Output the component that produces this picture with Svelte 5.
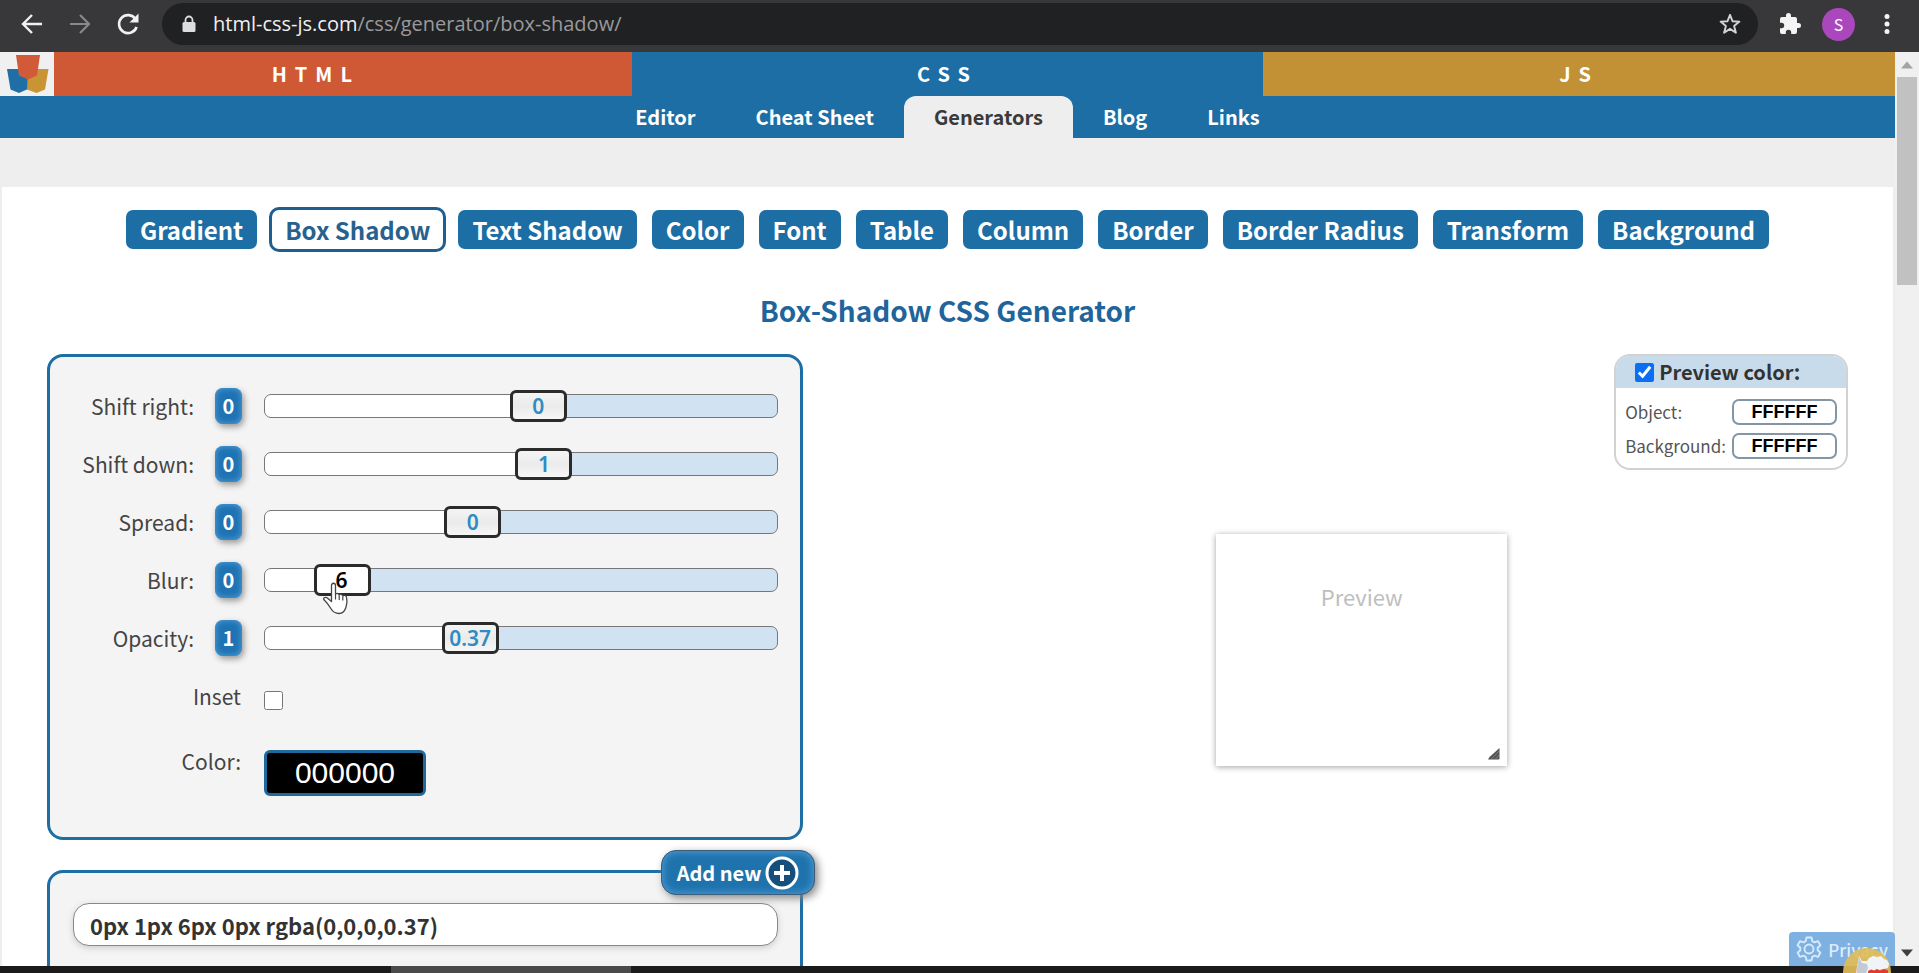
<script>
  const languages = [
    { name: 'HTML', tone: 'html' },
    { name: 'CSS', tone: 'css' },
    { name: 'JS', tone: 'js' }
  ];
  const sections = ['Editor', 'Cheat Sheet', 'Generators', 'Blog', 'Links'];
  const generators = [
    'Gradient', 'Box Shadow', 'Text Shadow', 'Color', 'Font', 'Table',
    'Column', 'Border', 'Border Radius', 'Transform', 'Background'
  ];

  let sliders = $state([
    { id: 'right', label: 'Shift right:', reset: 0, min: -43, max: 37, step: 1, value: 0 },
    { id: 'down', label: 'Shift down:', reset: 0, min: -43, max: 37, step: 1, value: 1 },
    { id: 'spread', label: 'Spread:', reset: 0, min: -39, max: 60, step: 1, value: 0 },
    { id: 'blur', label: 'Blur:', reset: 0, min: 0, max: 56, step: 1, value: 6, active: true },
    { id: 'opacity', label: 'Opacity:', reset: 1, min: -0.03, max: 1, step: 0.01, value: 0.37 }
  ]);
  let inset = $state(false);
  let color = $state('000000');
  let previewOn = $state(true);
  let objectColor = $state('FFFFFF');
  let backgroundColor = $state('FFFFFF');

  const shadow = $derived(
    `${sliders[0].value}px ${sliders[1].value}px ${sliders[3].value}px ${sliders[2].value}px rgba(0,0,0,${sliders[4].value})`
  );
  const share = (s) => (s.value - s.min) / (s.max - s.min);
</script>

<div class="window">
  <header class="browser">
    <button class="tool" aria-label="Back">
      <svg width="24" height="24" viewBox="0 0 24 24"><path d="M22 12H3M12 3l-9 9 9 9" fill="none" stroke="#f1f1f1" stroke-width="2.4" /></svg>
    </button>
    <button class="tool" aria-label="Forward">
      <svg width="24" height="24" viewBox="0 0 24 24"><path d="M2 12h19M12 3l9 9-9 9" fill="none" stroke="#88898b" stroke-width="2.2" /></svg>
    </button>
    <button class="tool" aria-label="Reload">
      <svg width="24" height="24" viewBox="0 0 24 24"><path d="M19.5 7A9 9 0 1 0 20.6 15" fill="none" stroke="#f1f1f1" stroke-width="2.6" /><path d="M22.500 1.500v9h-9z" fill="#f1f1f1" /></svg>
    </button>
    <div class="address">
      <svg width="14" height="18" viewBox="0 0 14 18"><path d="M3.500 8V5a3.500 3.500 0 0 1 7 0v3" fill="none" stroke="#dedede" stroke-width="1.800" /><rect x="0.500" y="7" width="13" height="10" rx="1.500" fill="#dedede" /></svg>
      <span class="url">html-css-js.com<span class="path">/css/generator/box-shadow/</span></span>
      <button class="star" aria-label="Bookmark this page">
        <svg width="24" height="24" viewBox="0 0 24 24"><path d="M12 2.800l2.500 6.400 6.900.4-5.300 4.400 1.800 6.700L12 16.900l-5.900 3.800 1.800-6.700-5.300-4.400 6.900-.4z" fill="none" stroke="#d4d4d4" stroke-width="1.900" stroke-linejoin="round" /></svg>
      </button>
    </div>
    <button class="tool" aria-label="Extensions">
      <svg width="24" height="24" viewBox="0 0 24 24"><path d="M20.500 11H19V7a2 2 0 0 0-2-2h-4V3.500a2.500 2.500 0 0 0-5 0V5H4a2 2 0 0 0-2 2v3.800h1.500a2.700 2.700 0 0 1 0 5.400H2V20c0 1.100.9 2 2 2h3.800v-1.500a2.700 2.700 0 0 1 5.400 0V22H17a2 2 0 0 0 2-2v-4h1.500a2.500 2.500 0 0 0 0-5z" fill="#f4f4f4" /></svg>
    </button>
    <button class="avatar" aria-label="Profile">S</button>
    <button class="tool" aria-label="Menu">
      <svg width="8" height="24" viewBox="0 0 8 24"><g fill="#f4f4f4"><circle cx="4" cy="4.500" r="2.500" /><circle cx="4" cy="12" r="2.500" /><circle cx="4" cy="19.500" r="2.500" /></g></svg>
    </button>
  </header>

  <div class="viewport">
    <div class="page">
      <nav class="languages" aria-label="Languages">
        {#each languages as lang}
          <a href="#{lang.tone}" class={lang.tone}>{lang.name}</a>
        {/each}
        <a class="logo" href="#home" aria-label="Home">
          <svg width="54" height="44" viewBox="0 0 54 44">
            <rect width="54" height="44" fill="#f0f0f1" />
            <path d="M7 17h21v20l-9 4-8.500-3.500z" fill="#1f6fa6" />
            <path d="M28 17h20.500L45 37.500 36.500 41 27 37.500z" fill="#c99433" />
            <path d="M16 3h24L37 23.500 28 27.500 19 23.500z" fill="#d15a38" />
          </svg>
        </a>
      </nav>
      <nav class="sections" aria-label="Sections">
        {#each sections as name}
          <a href="#{name}" class:current={name === 'Generators'}>{name}</a>
        {/each}
      </nav>

      <main>
        <nav class="generators" aria-label="Generators">
          {#each generators as name}
            <a href="#{name}" class:current={name === 'Box Shadow'}>{name}</a>
          {/each}
        </nav>
        <h1>Box-Shadow CSS Generator</h1>

        <div class="columns">
          <div class="left">
            <section class="panel settings">
              {#each sliders as s (s.id)}
                <div class="row">
                  <label for={s.id}>{s.label}</label>
                  <button class="reset" onclick={() => (s.value = s.reset)}>{s.reset}</button>
                  <div class="slider" class:active={s.active}>
                    <input
                      type="range" id={s.id} min={s.min} max={s.max} step={s.step}
                      bind:value={s.value} style="--share: {share(s)}"
                    />
                    <output for={s.id} style="--share: {share(s)}">{s.value}</output>
                    {#if s.active}
                      <svg class="pointer" style="--share: {share(s)}" width="27" height="33" viewBox="0 0 27 33">
                        <path d="M9.500 19.500V3.500c0-3 4-3 4 0v9c.5-1.800 3.300-1.600 3.700.6.900-1.500 3.300-1 3.600.9 1-1.200 3.300-.6 3.700 1.200.8 3 .5 7-.6 10.300C22.500 29.500 20.500 31.500 17 31.500c-4 0-6.500-2-8.500-5.500-1.900-3.200-4.200-6-6.500-8.200C.8 16.200 3 14.600 5 15.800z" fill="#fff" stroke="#444" stroke-width="1.300" stroke-linejoin="round" />
                        <path d="M13.500 12.500v5M17.200 13.500v4.500M20.800 14.500v4" stroke="#444" stroke-width="1.200" />
                      </svg>
                    {/if}
                  </div>
                </div>
              {/each}
              <div class="row inset">
                <label for="inset">Inset</label>
                <input type="checkbox" id="inset" bind:checked={inset} />
              </div>
              <div class="row color">
                <label for="color">Color:</label>
                <input type="text" id="color" bind:value={color} />
              </div>
            </section>

            <section class="panel results">
              <button class="add">
                Add new
                <svg width="34" height="34" viewBox="0 0 34 34"><circle cx="17" cy="17" r="15" fill="#164f7c" stroke="#fff" stroke-width="3" /><path d="M17 9v16M9 17h16" stroke="#fff" stroke-width="4" /></svg>
              </button>
              <input class="code" type="text" aria-label="Shadow value" value={shadow} readonly />
            </section>
          </div>

          <div class="right">
            <section class="swatches">
              <label class="heading"><input type="checkbox" bind:checked={previewOn} />Preview color:</label>
              <div class="fields">
                <label for="object">Object:</label>
                <input type="text" id="object" bind:value={objectColor} />
                <label for="background">Background:</label>
                <input type="text" id="background" bind:value={backgroundColor} />
              </div>
            </section>
            <div class="preview" style="box-shadow: {shadow}">
              Preview
              <svg width="12" height="12" viewBox="0 0 12 12"><path d="M11.500 0v11L11 11.500H0L1.500 9z" fill="#555" /><path d="M3 11.500l8.500-9M7 11.500l4.500-5" stroke="#999" stroke-width="0.600" /></svg>
            </div>
          </div>
        </div>
      </main>

      <button class="privacy">
        <svg width="26" height="26" viewBox="0 0 26 26"><g fill="none" stroke="#d5ebfb" stroke-width="1.900" stroke-linejoin="round"><path d="M10.500 1.500h5l.8 3.600 2.200 1.200 3.400-1.200 2.500 4.200-2.700 2.500v2.400l2.700 2.500-2.500 4.200-3.400-1.200-2.200 1.200-.8 3.600h-5l-.8-3.600-2.200-1.200-3.400 1.200-2.500-4.200 2.700-2.500v-2.400L1.600 9.300l2.500-4.200 3.400 1.200 2.200-1.200z" /><circle cx="13" cy="13" r="4.500" /></g></svg>
        Privacy
      </button>
    </div>

    <div class="scrollbar" aria-hidden="true">
      <svg width="12" height="8" viewBox="0 0 12 8"><path d="M0 7.500L6 .5l6 7z" fill="#a3a3a3" /></svg>
      <div class="thumb"></div>
      <svg width="12" height="8" viewBox="0 0 12 8"><path d="M0 .5l6 7 6-7z" fill="#404040" /></svg>
    </div>
  </div>

  <footer class="taskbar"><div class="task"></div></footer>

  <svg class="llama" width="48" height="26" viewBox="0 0 48 26" aria-hidden="true">
    <path d="M0 25A24 24 0 0 1 48 25V26H0z" fill="#e0bd58" fill-opacity="0.920" />
    <path d="M13 26l1-6 1-5 1-6 3 5h5l2-3 4-2 4 1 4-1 3 3 3 1 2 4-1 4-9 2-8 1-1 2z" fill="#f1f3f6" />
    <path d="M13.500 26l1-7 1.500-9 3 6 5 1 1 4-2 5z" fill="#c3cad6" />
    <path d="M25 26v-2l3-1.500 3 1 3-1.500 3 1.500 4-1.500 4 1.500v2.500z" fill="#e23b2e" />
  </svg>
</div>

<style>
  :global(body) {
    margin: 0;
    background: #eee;
  }

  button,
  input {
    box-sizing: border-box;
    margin: 0;
    font-family: inherit;
  }
  a {
    color: inherit;
    text-decoration: none;
  }
  svg {
    display: block;
    flex: none;
  }

  .window {
    --blue: #1c6ea4;
    position: relative;
    display: flex;
    flex-direction: column;
    height: 100vh;
    overflow: hidden;
    color: #444;
    font-family: 'Noto Sans CJK SC', 'Open Sans', sans-serif;
    font-size: 20px;
    line-height: 24px;
  }

  .browser {
    display: flex;
    align-items: center;
    flex: none;
    box-sizing: border-box;
    height: 52px;
    padding: 0 28px 4px 20px;
    background: #38383a;
  }
  .tool,
  .star {
    padding: 0;
    border: 0;
    background: none;
  }
  .tool + .tool {
    margin-left: 24px;
  }
  .address {
    display: flex;
    align-items: center;
    flex: 1;
    box-sizing: border-box;
    height: 42px;
    margin: 0 20px 0 22px;
    padding: 0 16px 0 20px;
    border-radius: 21px;
    background: #202123;
  }
  .url {
    flex: 1;
    margin-left: 17px;
    color: #f0f0f0;
    font-family: 'Open Sans', 'Noto Sans', sans-serif;
    font-size: 20px;
  }
  .path {
    color: #9a9a9c;
  }
  .avatar {
    width: 33px;
    height: 33px;
    margin: 0 28px 0 20px;
    padding: 0;
    border: 0;
    border-radius: 50%;
    background: #ab47bc;
    color: #fff;
    font-size: 16px;
  }

  .viewport {
    display: flex;
    flex: 1;
    min-height: 0;
  }
  .page {
    position: relative;
    flex: 1;
    min-width: 0;
    overflow: hidden;
    background: #eee;
  }
  .scrollbar {
    display: flex;
    flex-direction: column;
    align-items: center;
    box-sizing: border-box;
    width: 24px;
    padding: 9px 0;
    background: #f0f0f0;
  }
  .thumb {
    width: 20px;
    height: 208px;
    margin: 8px 0 auto;
    background: #c1c1c1;
  }

  .languages {
    position: relative;
    display: flex;
    color: #fff;
    font-weight: 700;
    line-height: 44px;
    letter-spacing: 8px;
    text-align: center;
  }
  .languages > a {
    flex: 1;
  }
  .languages > .logo {
    position: absolute;
    left: 0;
    top: 0;
  }
  .html { background: #d05935; }
  .css { background: var(--blue); }
  .js { background: #c39135; }

  .sections {
    display: flex;
    justify-content: center;
    background: var(--blue);
    color: #fff;
    font-weight: 700;
    line-height: 42px;
  }
  .sections a {
    padding: 0 30px;
  }
  .sections .current {
    border-radius: 12px 12px 0 0;
    background: #eee;
    color: #3a3a3a;
  }

  main {
    min-height: 760px;
    margin: 49px 2px 0;
    padding: 20px 45px 0;
    background: #fff;
  }
  .generators {
    display: flex;
    align-items: center;
    justify-content: center;
    gap: 15px;
    color: #fff;
    font-size: 24px;
    font-weight: 700;
    line-height: 39px;
    white-space: nowrap;
  }
  .generators a {
    padding: 0 14px;
    border-radius: 7px;
    background: var(--blue);
  }
  .generators .current {
    margin: 0 -3px;
    padding: 0 13px;
    border: 3px solid #1d5f92;
    border-radius: 10px;
    background: #fff;
    color: #27618f;
  }
  h1 {
    margin: 40px 0 26px;
    color: #1f659b;
    font-size: 28px;
    font-weight: 700;
    line-height: 36px;
    text-align: center;
  }

  .columns {
    display: flex;
  }
  .left {
    flex: none;
    width: 42%;
  }
  .panel {
    position: relative;
    box-sizing: border-box;
    border: 3px solid var(--blue);
    border-radius: 16px;
    background: #f4f4f4;
  }
  .settings {
    padding: 20px 22px 20px 20px;
  }
  .row {
    display: flex;
    align-items: center;
    height: 58px;
  }
  .row label {
    width: 124px;
    font-size: 21px;
    text-align: right;
  }
  .reset {
    width: 27px;
    height: 36px;
    margin: 0 22px 0 21px;
    padding: 0;
    border: 0;
    border-radius: 8px;
    background: #1f73b3;
    box-shadow: inset 0 0 6px #5aa5dd, 2px 3px 6px #999;
    color: #fff;
    font-size: 20px;
    font-weight: 700;
    line-height: 36px;
  }
  .slider {
    position: relative;
    flex: 1;
    height: 32px;
  }
  .slider input {
    appearance: none;
    display: block;
    width: 100%;
    height: 32px;
    background: none;
  }
  .slider input::-webkit-slider-runnable-track {
    box-sizing: border-box;
    height: 24px;
    border: 1px solid #777;
    border-radius: 7px;
    background: linear-gradient(
      to right,
      #fff calc(29px + var(--share) * (100% - 58px)),
      #d1e3f3 0
    );
  }
  .slider input::-webkit-slider-thumb {
    appearance: none;
    box-sizing: border-box;
    width: 57px;
    height: 32px;
    margin-top: -5px;
    border: 3px solid #2b2b2b;
    border-radius: 6px;
    background: linear-gradient(#f4f4f4, #ebebeb 50%, #f6f6f6);
  }
  .slider.active input::-webkit-slider-thumb {
    background: #fff;
  }
  .slider output {
    position: absolute;
    left: calc(var(--share) * (100% - 57px));
    top: 0;
    width: 57px;
    color: #2f8bc1;
    font-family: 'Noto Sans', sans-serif;
    font-size: 21px;
    font-weight: 600;
    line-height: 33px;
    text-align: center;
    pointer-events: none;
  }
  .slider.active output {
    color: #000;
  }
  .pointer {
    position: absolute;
    left: calc(var(--share) * (100% - 57px) + 9px);
    top: 18px;
    pointer-events: none;
  }
  .inset,
  .color {
    gap: 23px;
  }
  .row.inset label,
  .row.color label {
    width: 171px;
  }
  .inset input {
    width: 19px;
    height: 19px;
    margin-top: 8px;
  }
  .row.color {
    height: 92px;
  }
  .color label {
    margin-bottom: 20px;
  }
  .color input {
    width: 162px;
    height: 46px;
    margin-top: 4px;
    padding: 0;
    border: 3px solid #20699c;
    border-radius: 6px;
    background: #000;
    color: #fff;
    font-family: 'Liberation Sans', Arial, sans-serif;
    font-size: 30px;
    text-align: center;
  }

  .results {
    height: 240px;
    margin-top: 30px;
    padding: 30px 22px 0 23px;
  }
  .add {
    position: absolute;
    right: -15px;
    top: -23px;
    display: flex;
    align-items: center;
    gap: 4px;
    height: 45px;
    padding: 0 15px;
    border: 1px solid #3c5c78;
    border-radius: 15px;
    background: #1f73ad;
    box-shadow: inset 0 0 8px #5aa5dd, 3px 3px 8px #888;
    color: #fff;
    font-size: 20px;
    font-weight: 700;
    white-space: nowrap;
  }
  .code {
    width: 100%;
    height: 43px;
    padding: 0 16px;
    border: 1px solid #888;
    border-radius: 16px;
    background: #fff;
    box-shadow: 0 2px 6px #ccc;
    color: #333;
    font-size: 22px;
    font-weight: 700;
  }

  .right {
    display: grid;
    flex: 1;
    align-items: start;
    padding-left: 72px;
  }
  .right > * {
    grid-area: 1 / 1;
  }
  .preview {
    position: relative;
    justify-self: center;
    box-sizing: border-box;
    width: 291px;
    height: 232px;
    margin-top: 180px;
    padding-top: 50px;
    background: #fff;
    color: #bebebe;
    font-size: 22px;
    text-align: center;
  }
  .preview svg {
    position: absolute;
    right: 7px;
    bottom: 6px;
  }
  .swatches {
    justify-self: end;
    border: 2px solid #d0d2d4;
    border-radius: 16px;
    overflow: hidden;
  }
  .heading {
    display: flex;
    align-items: center;
    gap: 5px;
    height: 32px;
    padding: 0 19px;
    background: #c8dbea;
    color: #333;
    font-weight: 700;
  }
  .heading input {
    width: 19px;
    height: 19px;
    accent-color: #0b6ff5;
  }
  .fields {
    display: grid;
    grid-template-columns: 1fr 105px;
    align-items: center;
    gap: 8px 6px;
    padding: 11px 9px 9px;
    color: #555;
    font-size: 17px;
  }
  .fields input {
    width: 105px;
    height: 26px;
    padding: 0;
    border: 2px solid #8496a5;
    border-radius: 7px;
    background: #fff;
    color: #000;
    font-family: 'Liberation Sans', Arial, sans-serif;
    font-size: 18px;
    font-weight: 700;
    text-align: center;
  }

  .privacy {
    position: absolute;
    right: 0;
    bottom: 0;
    display: flex;
    align-items: center;
    gap: 6px;
    height: 34px;
    padding: 0 7px;
    border: 0;
    border-radius: 4px 4px 0 0;
    background: #7fb0e2;
    color: #dceefd;
    font-size: 17px;
    font-weight: 500;
  }
  .taskbar {
    display: flex;
    flex: none;
    height: 7px;
    background: #1b1b1c;
  }
  .task {
    width: 240px;
    margin-left: 391px;
    background: #4a4a4b;
  }
  .llama {
    position: absolute;
    right: 28px;
    bottom: 0;
  }
</style>
